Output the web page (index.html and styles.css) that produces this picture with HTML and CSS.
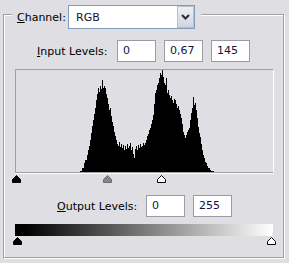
FILE: index.html
```html
<!DOCTYPE html>
<html lang="en">
<head>
    <meta charset="UTF-8">
    <title>Levels</title>
    <link rel="stylesheet" href="styles.css">
</head>
<body>
    <div class="panel">
        <div class="channel-row">
            <label class="field-label channel-label"><u>C</u>hannel:</label>
            <div class="select">
                <span class="select-value">RGB</span>
                <span class="select-btn">
                    <svg width="9" height="6" viewBox="0 0 9 6"><path d="M1 1 L4.5 4.5 L8 1" fill="none" stroke="#2b2b3a" stroke-width="2"/></svg>
                </span>
            </div>
        </div>

        <div class="levels-row input-row">
            <label class="field-label input-label"><u>I</u>nput Levels:</label>
            <div class="num-box">0</div>
            <div class="num-box">0,67</div>
            <div class="num-box">145</div>
        </div>

        <div class="histogram">
            <svg width="257" height="102" viewBox="0 0 257 102">
                <path fill="#000" d="M64 102V101h2V98h2V93h1V90h2V85h1V80h1V76h1V70h1V63h1V56h1V50h1V44h1V38h1V30h1V24h1V18h1V22h1V16h1V19h1V10h1V18h1V16h1V18h1V24h1V28h1V34h1V40h1V38h1V46h1V52h1V56h1V62h1V66h1V70h1V74h1V76h1V72h1V77h1V74h1V78h1V75h1V80h1V76h1V79h1V74h1V78h1V76h1V73h1V80h1V77h1V84h1V88h1V79h1V76h1V80h1V75h1V78h1V74h1V77h1V76h1V73h1V75h1V73h1V70h1V66h1V64h1V60h1V58h1V54h1V50h1V45h1V34h1V23h1V20h1V15h1V13h1V8h1V3h1V5h1V0h1V7h1V13h1V15h1V8h1V23h1V20h1V25h1V28h1V26h1V30h1V33h1V29h1V30h1V34h1V38h1V36h1V40h1V44h1V48h1V54h1V62h1V65h1V68h1V65h1V62h1V60h1V58h1V50h1V43h1V38h1V27h1V35h1V33h1V40h1V48h1V57h1V63h1V67h1V74h1V80h1V85h1V88h1V92h1V93h1V96h1V98h2V100h1V101h3V102Z"/>
            </svg>
        </div>

        <div class="slider-track input-track">
            <svg class="handle handle-black" style="left: -3px;" viewBox="0 0 9 8"><path d="M4.5 0.5 L8.5 4.5 V7.5 H0.5 V4.5 Z"/></svg>
            <svg class="handle handle-gray" style="left: 88px;" viewBox="0 0 9 8"><path d="M4.5 0.5 L8.5 4.5 V7.5 H0.5 V4.5 Z"/></svg>
            <svg class="handle handle-white" style="left: 142px;" viewBox="0 0 9 8"><path d="M4.5 0.5 L8.5 4.5 V7.5 H0.5 V4.5 Z"/></svg>
        </div>

        <div class="levels-row output-row">
            <label class="field-label output-label"><u>O</u>utput Levels:</label>
            <div class="num-box">0</div>
            <div class="num-box">255</div>
        </div>

        <div class="gradient-bar"></div>

        <div class="slider-track output-track">
            <svg class="handle handle-black" style="left: -2px;" viewBox="0 0 9 8"><path d="M4.5 0.5 L8.5 4.5 V7.5 H0.5 V4.5 Z"/></svg>
            <svg class="handle handle-white" style="left: 252px;" viewBox="0 0 9 8"><path d="M4.5 0.5 L8.5 4.5 V7.5 H0.5 V4.5 Z"/></svg>
        </div>
    </div>
</body>
</html>
```

FILE: styles.css
```css
body {
    margin: 0;
    background-color: #dfdee3;
    font-family: "DejaVu Sans", Verdana, sans-serif;
    font-size: 11px;
    color: #000;
    width: 289px;
    height: 263px;
    overflow: hidden;
}

.panel {
    box-sizing: border-box;
    width: 281px;
    height: 244px;
    margin: 14px 0 0 3px;
    border: 1px solid #a0a0a4;
    box-shadow: 1px 1px 0 #fff, inset 1px 1px 0 #fff;
}

.field-label {
    display: inline-block;
    white-space: nowrap;
}

/* channel selector sits on the group box line */
.channel-row {
    display: flex;
    align-items: center;
    width: fit-content;
    height: 24px;
    margin: -10px 0 0 8px;
    padding: 0 6px 0 5px;
    background-color: #dfdee3;
}

.channel-label {
    width: 51px;
}

.select {
    box-sizing: border-box;
    position: relative;
    display: flex;
    align-items: center;
    width: 127px;
    height: 24px;
    border: 1px solid #7f9db9;
    background-color: #fff;
}

.select-value {
    padding-left: 7px;
    color: #14143a;
}

.select-btn {
    box-sizing: border-box;
    display: flex;
    align-items: center;
    justify-content: center;
    width: 17px;
    height: 22px;
    margin-left: auto;
    border: 1px solid #b9c0d0;
    background: linear-gradient(#eef0f6, #cfd4e2);
}

.levels-row {
    display: flex;
    align-items: center;
    gap: 8px;
    height: 22px;
}

.input-row {
    margin-top: 11px;
    padding-left: 33px;
}

.input-label {
    width: 72px;
}

.output-row {
    margin-top: 12px;
    padding-left: 53px;
}

.output-label {
    width: 81px;
}

.num-box {
    box-sizing: border-box;
    width: 39px;
    height: 22px;
    padding-left: 5px;
    line-height: 20px;
    border: 1px solid #9c9ca4;
    background-color: #fff;
    color: #14143a;
}

.histogram {
    box-sizing: border-box;
    width: 259px;
    height: 104px;
    margin: 7px 0 0 11px;
    border-top: 1px solid #a0a0a4;
    border-left: 1px solid #a0a0a4;
    border-bottom: 1px solid #a0a0a4;
    border-right: 1px solid #fff;
    box-shadow: 0 1px 0 #fff;
}

.histogram svg {
    display: block;
}

.slider-track {
    position: relative;
    width: 259px;
    height: 8px;
    margin-left: 11px;
}

.input-track {
    margin-top: 2px;
}

.output-track {
    margin-top: 1px;
}

.handle {
    position: absolute;
    top: 0;
    width: 9px;
    height: 8px;
}

.handle-black path {
    fill: #000;
    stroke: #000;
}

.handle-gray path {
    fill: #86868a;
    stroke: #6e6e72;
}

.handle-white path {
    fill: #fff;
    stroke: #000;
}

.gradient-bar {
    width: 258px;
    height: 12px;
    margin: 7px 0 0 11px;
    background: linear-gradient(to right, #000 0, #000 4%, #fff 100%);
}
```
